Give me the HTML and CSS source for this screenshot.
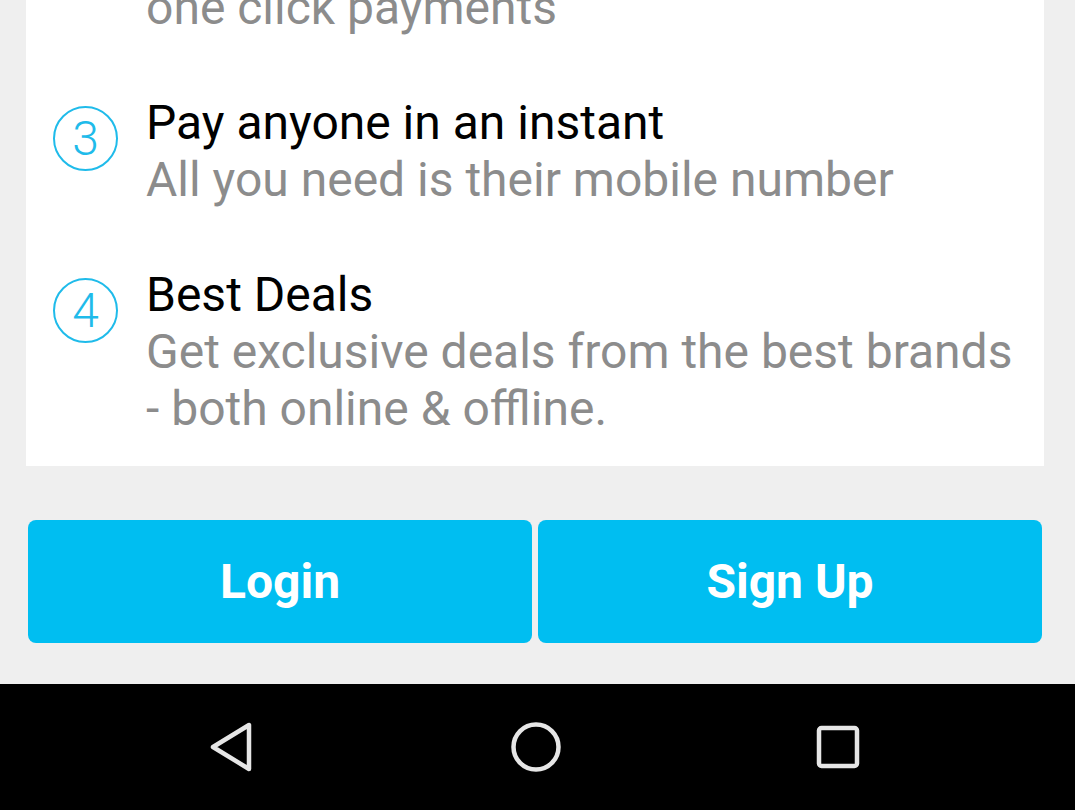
FILE: index.html
```html
<!DOCTYPE html>
<html lang="en">
<head>
<meta charset="utf-8">
<title>Welcome</title>
<link rel="stylesheet" href="styles.css">
</head>
<body>
<div class="screen">
  <main class="content">
    <section class="card">
      <p class="step-tail">one click payments</p>
      <ul class="steps">
        <li class="step">
          <span class="badge">3</span>
          <div class="step-text">
            <h3 class="step-title">Pay anyone in an instant</h3>
            <p class="step-desc">All you need is their mobile number</p>
          </div>
        </li>
        <li class="step">
          <span class="badge">4</span>
          <div class="step-text">
            <h3 class="step-title">Best Deals</h3>
            <p class="step-desc">Get exclusive deals from the best brands<br>- both online &amp; offline.</p>
          </div>
        </li>
      </ul>
    </section>
    <div class="actions">
      <button class="btn">Login</button>
      <button class="btn">Sign Up</button>
    </div>
  </main>
  <nav class="navbar">
    <svg class="nav-icon" width="50" height="54" viewBox="0 0 50 54"><path d="M41 5 L41 49 L5 27 Z" fill="none" stroke="#e6e6e6" stroke-width="4.5" stroke-linejoin="round"/></svg>
    <svg class="nav-icon" width="54" height="54" viewBox="0 0 54 54"><circle cx="27" cy="27" r="22.5" fill="none" stroke="#e6e6e6" stroke-width="4.5"/></svg>
    <svg class="nav-icon" width="50" height="50" viewBox="0 0 50 50"><rect x="6" y="6" width="38" height="38" rx="2.5" fill="none" stroke="#e6e6e6" stroke-width="4.5"/></svg>
  </nav>
</div>
</body>
</html>
```

FILE: styles.css
```css
* { box-sizing: border-box; }
html, body {
  margin: 0;
  padding: 0;
}
body {
  background: #efefef;
  font-family: Roboto, "Liberation Sans", sans-serif;
}
.screen {
  width: 1075px;
  height: 810px;
  overflow: hidden;
  display: flex;
  flex-direction: column;
}
.content {
  height: 684px;
  flex: none;
  display: flex;
  flex-direction: column;
  overflow: hidden;
}
.card {
  margin: -21px 31px 0 26px;
  background: #ffffff;
  padding: 0 12px 29px 27px;
}
.step-tail {
  margin: 0 0 0 93px;
  font-size: 48px;
  line-height: 57px;
  color: #8c8c8c;
  white-space: nowrap;
}
.steps {
  list-style: none;
  margin: 0;
  padding: 0;
}
.step {
  display: flex;
  align-items: flex-start;
  gap: 28px;
  margin-top: 58px;
}
.badge {
  flex: none;
  width: 65px;
  height: 65px;
  margin-top: 12px;
  border: 2.5px solid #1fbbea;
  border-radius: 50%;
  color: #1fbbea;
  font-size: 48px;
  font-weight: 300;
  line-height: 1;
  display: flex;
  align-items: center;
  justify-content: center;
}
.step-title {
  margin: 0;
  font-size: 48px;
  font-weight: 400;
  line-height: 57px;
  color: #000000;
}
.step-desc {
  margin: 0;
  font-size: 48px;
  line-height: 57px;
  color: #8c8c8c;
}
.actions {
  display: flex;
  gap: 6px;
  margin: 54px 33px 0 28px;
}
.btn {
  flex: 1;
  height: 123px;
  border: none;
  border-radius: 8px;
  background: #00bef1;
  color: #ffffff;
  font-family: Roboto, "Liberation Sans", sans-serif;
  font-size: 48px;
  font-weight: 700;
}
.navbar {
  flex: 1;
  background: #000000;
  display: flex;
  align-items: center;
  justify-content: space-between;
  padding: 0 212px 0 208px;
}
.nav-icon {
  display: block;
}
```
